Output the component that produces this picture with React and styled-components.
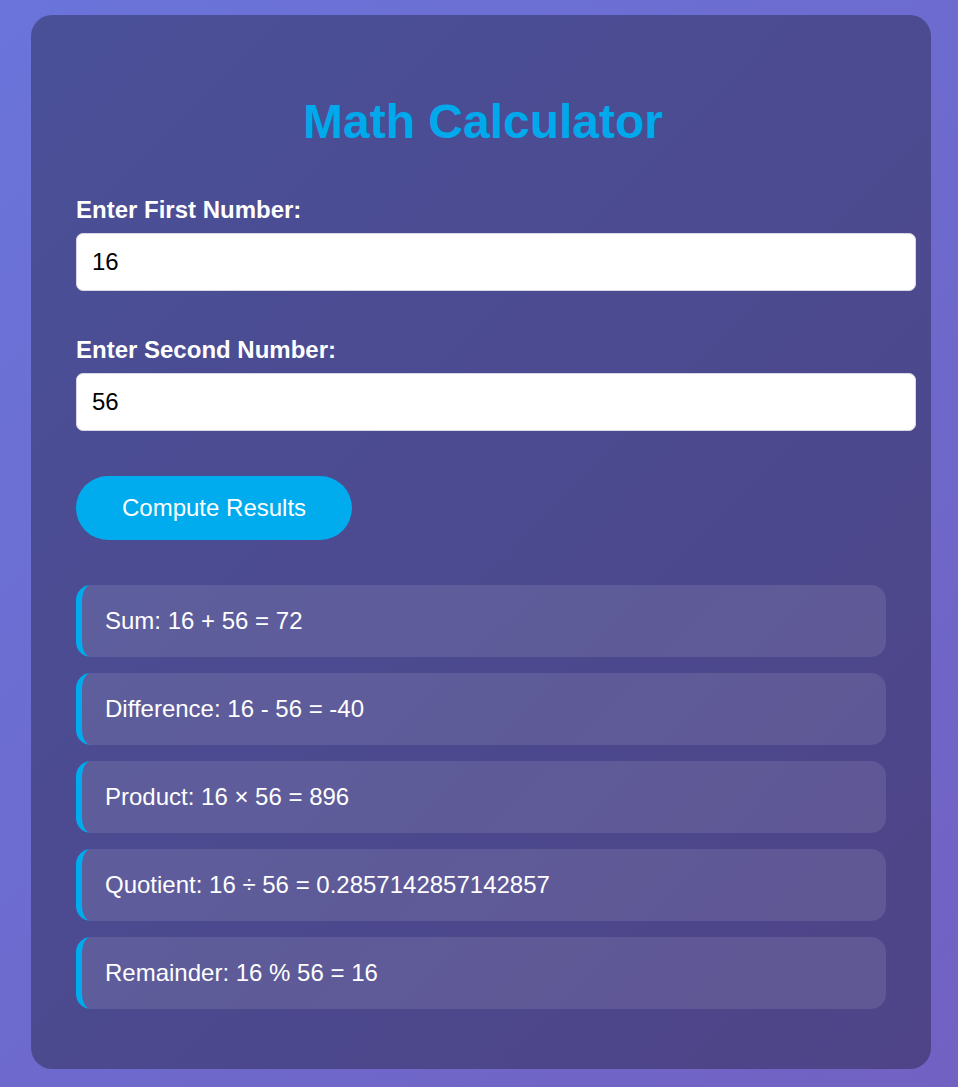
import React, { useState } from "react";
import styled, { createGlobalStyle } from "styled-components";

const GlobalStyle = createGlobalStyle`
  html, body {
    margin: 0;
    padding: 0;
  }
  body {
    min-height: 1087px;
    font-family: "Liberation Sans", Arial, sans-serif;
    background: linear-gradient(135deg, #6a74da 0%, #7161c2 100%);
    background-attachment: fixed;
  }
`;

const Page = styled.div`
  padding: 15px 0 18px 31px;
`;

const Card = styled.div`
  width: 900px;
  box-sizing: border-box;
  padding: 45px;
  background: rgba(0, 0, 0, 0.3);
  border-radius: 21px;
`;

const Title = styled.h1`
  margin: 34px 0 47px;
  padding-left: 4px;
  font-size: 48px;
  font-weight: bold;
  color: #00a9ec;
  text-align: center;
`;

const Field = styled.div`
  margin-bottom: 45px;
`;

const Label = styled.label`
  display: block;
  margin-bottom: 9px;
  font-size: 24px;
  font-weight: bold;
  color: #ffffff;
`;

const Input = styled.input`
  display: block;
  width: 840px;
  height: 58px;
  box-sizing: border-box;
  padding: 0 15px;
  border: 1px solid #d8d8e4;
  border-radius: 7px;
  background: #ffffff;
  font-family: "Liberation Sans", Arial, sans-serif;
  font-size: 24px;
  color: #000000;
  outline: none;
`;

const Button = styled.button`
  display: block;
  height: 64px;
  padding: 0 46px;
  margin-bottom: 45px;
  border: none;
  border-radius: 32px;
  background: #00aced;
  color: #ffffff;
  font-family: "Liberation Sans", Arial, sans-serif;
  font-size: 24px;
  cursor: pointer;
`;

const Results = styled.div`
  display: flex;
  flex-direction: column;
  gap: 16px;
  width: 810px;
  margin-bottom: 15px;
`;

const ResultRow = styled.div`
  height: 72px;
  box-sizing: border-box;
  display: flex;
  align-items: center;
  padding: 0 22px 0 23px;
  border-left: 6px solid #00aced;
  border-radius: 15px;
  background: rgba(255, 255, 255, 0.1);
  color: #ffffff;
  font-size: 24px;
`;

export default function App() {
  const [a, setA] = useState("16");
  const [b, setB] = useState("56");
  const x = Number(a);
  const y = Number(b);

  const rows = [
    `Sum: ${x} + ${y} = ${x + y}`,
    `Difference: ${x} - ${y} = ${x - y}`,
    `Product: ${x} × ${y} = ${x * y}`,
    `Quotient: ${x} ÷ ${y} = ${x / y}`,
    `Remainder: ${x} % ${y} = ${x % y}`,
  ];

  return (
    <>
      <GlobalStyle />
      <Page>
        <Card>
          <Title>Math Calculator</Title>
          <Field>
            <Label htmlFor="first">Enter First Number:</Label>
            <Input id="first" value={a} onChange={(e) => setA(e.target.value)} />
          </Field>
          <Field>
            <Label htmlFor="second">Enter Second Number:</Label>
            <Input id="second" value={b} onChange={(e) => setB(e.target.value)} />
          </Field>
          <Button>Compute Results</Button>
          <Results>
            {rows.map((r) => (
              <ResultRow key={r}>{r}</ResultRow>
            ))}
          </Results>
        </Card>
      </Page>
    </>
  );
}
